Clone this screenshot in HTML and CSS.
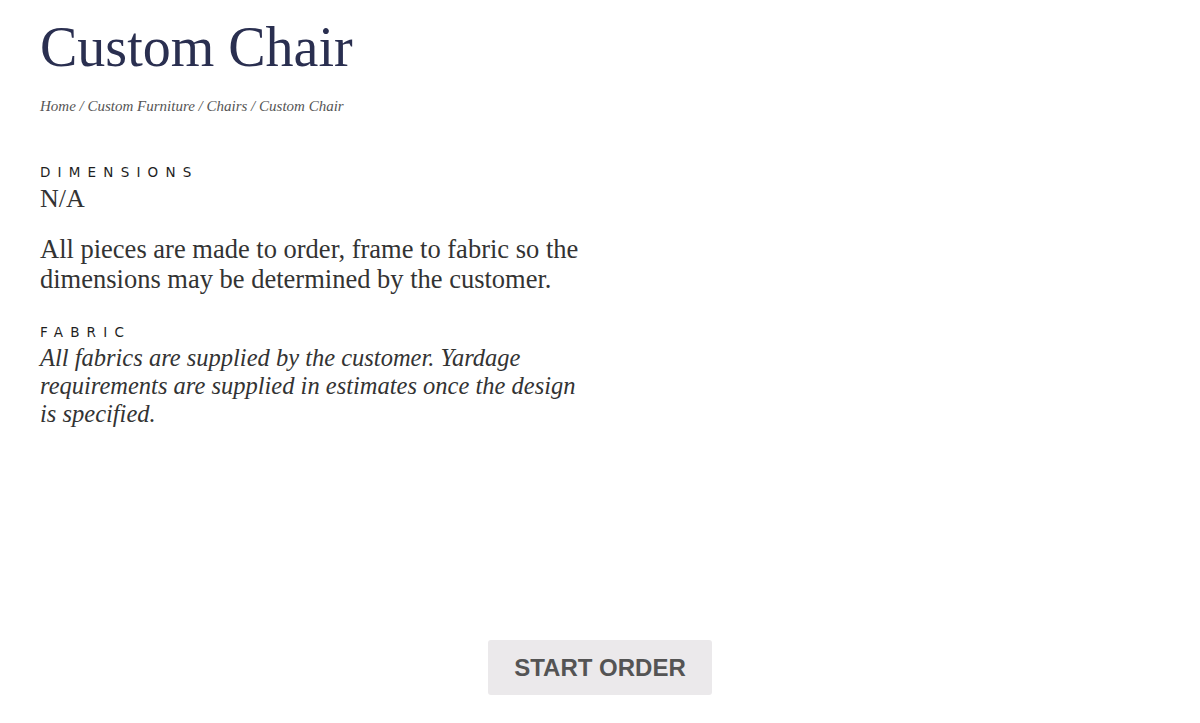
FILE: index.html
```html
<!DOCTYPE html>
<html>
<head>
<meta charset="utf-8">
<link rel="stylesheet" href="styles.css">
</head>
<body>
<div class="page">
  <section class="details">
    <h1 class="title">Custom Chair</h1>
    <nav class="crumbs">Home / Custom Furniture / Chairs / Custom Chair</nav>
    <div class="label label-dim">DIMENSIONS</div>
    <div class="value">N/A</div>
    <p class="para">All pieces are made to order, frame to fabric so the dimensions may be determined by the customer.</p>
    <div class="label label-fab">FABRIC</div>
    <p class="para italic">All fabrics are supplied by the customer. Yardage requirements are supplied in estimates once the design is specified.</p>
  </section>
  <div class="actions">
    <button class="btn">START ORDER</button>
  </div>
</div>
</body>
</html>
```
FILE: styles.css
```css
html, body {
  margin: 0;
  padding: 0;
  background: #ffffff;
}
.page {
  width: 1200px;
  height: 723px;
  display: flex;
  flex-direction: column;
  font-family: "Liberation Serif", "Times New Roman", serif;
}
.details {
  padding: 15px 0 0 40px;
  width: 550px;
}
.title {
  margin: 0;
  font-weight: normal;
  font-size: 56px;
  line-height: 64px;
  color: #2a2f50;
}
.crumbs {
  margin-top: 18px;
  font-style: italic;
  font-size: 15px;
  line-height: 18px;
  color: #555;
}
.label {
  font-family: "DejaVu Sans", sans-serif;
  font-size: 13.5px;
  letter-spacing: 7.2px;
  color: #1e1e1e;
  line-height: 16px;
}
.label-dim { margin-top: 49px; }
.label-fab { margin-top: 30px; }
.value {
  margin-top: 4px;
  font-size: 26px;
  line-height: 30px;
  color: #333;
}
.para {
  margin: 0;
  margin-top: 20px;
  font-size: 26.5px;
  line-height: 30px;
  color: #333;
}
.para.italic {
  margin-top: 4px;
  font-style: italic;
  font-size: 24.5px;
  line-height: 28px;
}
.actions {
  margin-top: auto;
  margin-bottom: 28px;
  display: flex;
  justify-content: center;
}
.btn {
  width: 224px;
  height: 55px;
  border: none;
  border-radius: 3px;
  background: #ebe9eb;
  color: #545454;
  font-family: "Liberation Sans", Arial, sans-serif;
  font-weight: bold;
  font-size: 24px;
  padding: 0;
}
```
